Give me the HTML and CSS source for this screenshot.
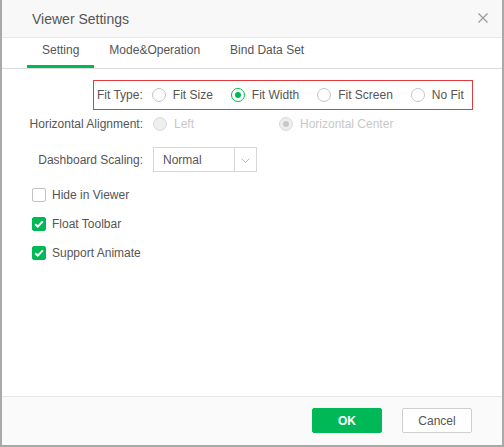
FILE: index.html
```html
<!DOCTYPE html>
<html>
<head>
<meta charset="utf-8">
<link rel="stylesheet" href="styles.css">
</head>
<body>
<div class="dialog">
  <div class="header">
    <span class="title">Viewer Settings</span>
    <svg class="close" width="10" height="10" viewBox="0 0 10 10"><path d="M0.5 0.5L9.5 9.5M9.5 0.5L0.5 9.5" stroke="#999" stroke-width="1.2" fill="none"/></svg>
  </div>
  <div class="tabs">
    <div class="tab active">Setting</div>
    <div class="tab">Mode&amp;Operation</div>
    <div class="tab">Bind Data Set</div>
  </div>
  <div class="body">
    <div class="fit-box">
      <span class="fit-label">Fit Type:</span>
      <label class="opt"><span class="radio"></span>Fit Size</label>
      <label class="opt"><span class="radio checked"></span>Fit Width</label>
      <label class="opt"><span class="radio"></span>Fit Screen</label>
      <label class="opt"><span class="radio"></span>No Fit</label>
    </div>
    <div class="row align-row">
      <span class="label">Horizontal Alignment:</span>
      <label class="opt disabled wide"><span class="radio dis"></span>Left</label>
      <label class="opt disabled"><span class="radio dis dis-checked"></span>Horizontal Center</label>
    </div>
    <div class="row scale-row">
      <span class="label">Dashboard Scaling:</span>
      <div class="select">
        <span class="select-text">Normal</span>
        <span class="select-arrow"><svg width="9" height="5" viewBox="0 0 9 5"><path d="M0.5 0.5L4.5 4.5L8.5 0.5" stroke="#bbb" stroke-width="1" fill="none"/></svg></span>
      </div>
    </div>
    <div class="checks">
      <label class="check-row"><span class="cbox"></span>Hide in Viewer</label>
      <label class="check-row"><span class="cbox on"><svg width="10" height="8" viewBox="0 0 10 8"><path d="M1.2 4.2L3.8 6.6L8.8 1.4" stroke="#fff" stroke-width="2" fill="none"/></svg></span>Float Toolbar</label>
      <label class="check-row"><span class="cbox on"><svg width="10" height="8" viewBox="0 0 10 8"><path d="M1.2 4.2L3.8 6.6L8.8 1.4" stroke="#fff" stroke-width="2" fill="none"/></svg></span>Support Animate</label>
    </div>
  </div>
  <div class="footer">
    <button class="btn ok">OK</button>
    <button class="btn cancel">Cancel</button>
  </div>
</div>
</body>
</html>
```

FILE: styles.css
```css
* { box-sizing: border-box; }
html, body { margin: 0; padding: 0; background: #fff; }
body { font-family: "Liberation Sans", Arial, sans-serif; font-size: 12px; color: #555; }

.dialog {
  width: 504px;
  height: 447px;
  border: 2px solid #a9a9a9;
  border-top: 0;
  display: flex;
  flex-direction: column;
  background: #fff;
}

.header {
  height: 38px;
  flex: none;
  background: #f8f8f8;
  border-bottom: 1px solid #e8e8e8;
  display: flex;
  align-items: center;
  justify-content: space-between;
  padding: 0 14px 0 30px;
}
.title { font-size: 14px; color: #555; }
.close { display: block; margin-top: -1px; }

.tabs {
  height: 31px;
  flex: none;
  display: flex;
  padding-left: 25px;
  border-bottom: 1px solid #dcdcdc;
}
.tab {
  padding: 0 15px 3px;
  line-height: 24px;
  height: 30px;
  border-bottom: 3px solid transparent;
  color: #555;
  white-space: nowrap;
}
.tab.active { border-bottom-color: #00b956; }

.body { flex: 1; padding-top: 11px; }

.fit-box {
  margin-left: 91px;
  width: 380px;
  height: 30px;
  border: 1px solid #e0393e;
  display: flex;
  align-items: center;
  padding-left: 3px;
  white-space: nowrap;
}
.fit-label { flex: none; margin-right: 9px; }

.opt { display: flex; align-items: center; margin-right: 18px; color: #555; white-space: nowrap; flex: none; }
.opt .radio { margin-right: 7px; }
.opt.disabled { color: #c8c8c8; }
.opt.wide { width: 126px; margin-right: 0; }

.radio {
  width: 14px;
  height: 14px;
  border: 1px solid #c4c4c4;
  border-radius: 50%;
  background: #fff;
  display: inline-flex;
  align-items: center;
  justify-content: center;
  flex: none;
}
.radio.checked { border-color: #00b956; }
.radio.checked::after {
  content: "";
  width: 6px;
  height: 6px;
  border-radius: 50%;
  background: #00b956;
}
.radio.dis { background: #eee; border-color: #dadada; }
.radio.dis-checked::after {
  content: "";
  width: 6px;
  height: 6px;
  border-radius: 50%;
  background: #c8c8c8;
}

.row { display: flex; align-items: center; }
.label { width: 141px; text-align: right; margin-right: 10px; white-space: nowrap; flex: none; }
.align-row { height: 28px; }
.scale-row { margin-top: 9px; height: 25px; }

.select {
  width: 104px;
  height: 25px;
  border: 1px solid #d6d6d6;
  display: flex;
  align-items: center;
}
.select-text { flex: 1; padding-left: 9px; color: #555; }
.select-arrow {
  width: 22px;
  height: 23px;
  border-left: 1px solid #d6d6d6;
  display: flex;
  align-items: center;
  justify-content: center;
}
.select-arrow svg { display: block; margin-top: 1px; }

.checks { margin-top: 8px; padding-left: 30px; }
.check-row { display: flex; align-items: center; height: 29px; color: #555; }
.cbox {
  width: 14px;
  height: 14px;
  border: 1px solid #c4c4c4;
  border-radius: 2px;
  background: #fff;
  margin-right: 6px;
  display: inline-flex;
  align-items: center;
  justify-content: center;
  flex: none;
}
.cbox.on { background: #00b956; border-color: #00b956; }
.cbox svg { display: block; }

.footer {
  height: 49px;
  flex: none;
  border-top: 1px solid #e6e6e6;
  background: #fafafa;
  display: flex;
  align-items: center;
  justify-content: flex-end;
  gap: 20px;
  padding-right: 30px;
}
.btn {
  width: 70px;
  height: 25px;
  font-family: "Liberation Sans", Arial, sans-serif;
  font-size: 12px;
  border-radius: 2px;
  padding: 0;
  margin-top: -1px;
}
.btn.ok { background: #00b956; border: 1px solid #00b956; color: #fff; font-weight: bold; }
.btn.cancel { background: #fff; border: 1px solid #cfcfcf; color: #555; }
```
